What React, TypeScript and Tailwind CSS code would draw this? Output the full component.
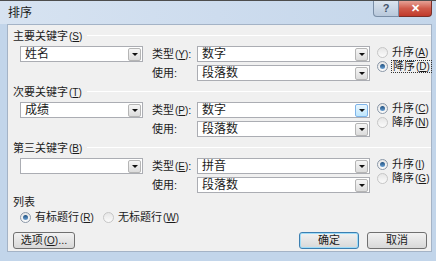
import React from 'react'

function Mn({ k }: { k: string }) {
  return (
    <span className="ml-px text-[10px]">
      (<span className="underline">{k}</span>)
    </span>
  )
}

function DropBtn({ active }: { active?: boolean }) {
  return (
    <div
      className={
        'mr-px flex h-[13px] w-[13px] items-center justify-center rounded-[2px] border ' +
        (active
          ? 'border-[#7eb4ea] bg-gradient-to-b from-[#eaf6fd] to-[#bee6fd]'
          : 'border-[#b5b5b5] bg-gradient-to-b from-[#f6f6f6] to-[#dcdcdc]')
      }
    >
      <div className="h-0 w-0 border-l-[3px] border-r-[3px] border-t-[3px] border-l-transparent border-r-transparent border-t-[#111]" />
    </div>
  )
}

function Combo({ text, w, active }: { text: string; w: string; active?: boolean }) {
  return (
    <div className={'flex h-[16px] shrink-0 items-center border border-[#abadb3] bg-white ' + w}>
      <span className="flex-1 pl-[4px] text-[12px] leading-none">{text}</span>
      <DropBtn active={active} />
    </div>
  )
}

function Radio({ checked, label, k, focus }: { checked?: boolean; label: string; k: string; focus?: boolean }) {
  return (
    <div className="flex h-[14px] items-center whitespace-nowrap">
      <div
        className={
          'flex h-[11px] w-[11px] shrink-0 items-center justify-center rounded-full border bg-gradient-to-b from-[#e6e6e6] to-[#fbfbfb] ' +
          (checked ? 'border-[#8b98a8]' : 'border-[#c6c6c6]')
        }
      >
        {checked && <div className="h-[5px] w-[5px] rounded-full bg-gradient-to-b from-[#1d4f7f] to-[#6ba1d4]" />}
      </div>
      <span className={'ml-[4px] leading-none ' + (focus ? 'px-px outline outline-1 outline-dotted outline-[#333]' : '')}>
        {label}
        <Mn k={k} />
      </span>
    </div>
  )
}

interface SectionProps {
  title: string
  k: string
  first: string
  type: string
  tk: string
  asc: string
  desc: string
  ascChecked?: boolean
  focusDesc?: boolean
  activeBtn?: boolean
  cls: string
}

function Section({ title, k, first, type, tk, asc, desc, ascChecked, focusDesc, activeBtn, cls }: SectionProps) {
  return (
    <div className={cls}>
      <div className="flex h-[14px] items-center pl-[5px]">
        <span className="whitespace-nowrap leading-none">
          {title}
          <Mn k={k} />
        </span>
        <div className="ml-[5px] mt-[-2px] h-px flex-1 border-b border-white bg-[#d9dde2]" />
      </div>
      <div className="mt-[3px] flex items-start">
        <div className="ml-[12px]">
          <Combo text={first} w="w-[123px]" />
        </div>
        <div className="ml-[9px] flex shrink-0 flex-col gap-[3px]">
          <div className="flex items-center">
            <span className="w-[45px] whitespace-nowrap leading-none">
              类型
              <Mn k={tk} />:
            </span>
            <Combo text={type} w="w-[173px]" active={activeBtn} />
          </div>
          <div className="flex items-center">
            <span className="w-[45px] leading-none">使用:</span>
            <Combo text="段落数" w="w-[173px]" />
          </div>
        </div>
        <div className="ml-[7px] mt-[-1px] flex shrink-0 flex-col">
          <Radio checked={ascChecked} label="升序" k={asc} />
          <Radio checked={!ascChecked} label="降序" k={desc} focus={focusDesc} />
        </div>
      </div>
    </div>
  )
}

function Btn({ children, def, w }: { children: React.ReactNode; def?: boolean; w: string }) {
  return (
    <div
      className={
        'flex h-[17px] items-center justify-center whitespace-nowrap rounded-[3px] border bg-gradient-to-b from-[#f2f2f2] to-[#d8d8d8] ' +
        (def ? 'border-[#3c7fb1] shadow-[inset_0_0_0_1px_#9fdcf8]' : 'border-[#707070]') +
        ' ' +
        w
      }
    >
      <span className="leading-none">{children}</span>
    </div>
  )
}

export default function App() {
  return (
    <div className="relative h-[261px] w-[436px] overflow-hidden bg-[#c2d5ea] font-['Liberation_Sans','Noto_Sans_CJK_SC',sans-serif] text-[11px] text-[#1b1b1b]">
      <div className="h-px bg-[#4d4d4d]" />
      {/* title bar */}
      <div className="flex h-[23px] items-start bg-gradient-to-r from-[#d7e3f1] via-[#cddcee] to-[#c4d6ea]">
        <span className="ml-[8px] mt-[6px] text-[12px] leading-none">排序</span>
        <div className="ml-auto mr-[4px] flex">
          <div className="flex h-[16px] w-[26px] items-center justify-center rounded-bl-[4px] border border-t-0 border-[#7a8ea6] bg-gradient-to-b from-[#dbe4ee] to-[#b8c8db] text-[11px] font-bold text-[#44546a]">
            ?
          </div>
          <div className="flex h-[16px] w-[33px] items-center justify-center rounded-br-[4px] border border-l-0 border-t-0 border-[#7a2f28] bg-gradient-to-b from-[#e6a196] via-[#cf5a4a] to-[#c0392b] text-[11px] font-bold text-white">
            ✕
          </div>
        </div>
      </div>
      {/* content */}
      <div className="ml-[7px] mr-[4px] flex h-[228px] flex-col border border-[#a4b3c6] bg-[#f0f0f0]">
        <Section
          cls="mt-[4px]"
          title="主要关键字"
          k="S"
          first="姓名"
          type="数字"
          tk="Y"
          asc="A"
          desc="D"
          focusDesc
        />
        <Section
          cls="mt-[4px]"
          title="次要关键字"
          k="T"
          first="成绩"
          type="数字"
          tk="P"
          asc="C"
          desc="N"
          ascChecked
          activeBtn
        />
        <Section
          cls="mt-[4px]"
          title="第三关键字"
          k="B"
          first=""
          type="拼音"
          tk="E"
          asc="I"
          desc="G"
          ascChecked
        />
        <div className="mt-[2px] flex h-[14px] items-center pl-[5px]">
          <span className="leading-none">列表</span>
        </div>
        <div className="mt-px flex items-center gap-[9px] pl-[12px]">
          <Radio checked label="有标题行" k="R" />
          <Radio label="无标题行" k="W" />
        </div>
        <div className="mt-[8px] flex items-center pl-[5px] pr-[4px]">
          <Btn w="w-[62px]">
            选项
            <Mn k="O" />
            ...
          </Btn>
          <div className="ml-auto flex gap-[8px]">
            <Btn def w="w-[60px]">
              确定
            </Btn>
            <Btn w="w-[60px]">取消</Btn>
          </div>
        </div>
      </div>
    </div>
  )
}
